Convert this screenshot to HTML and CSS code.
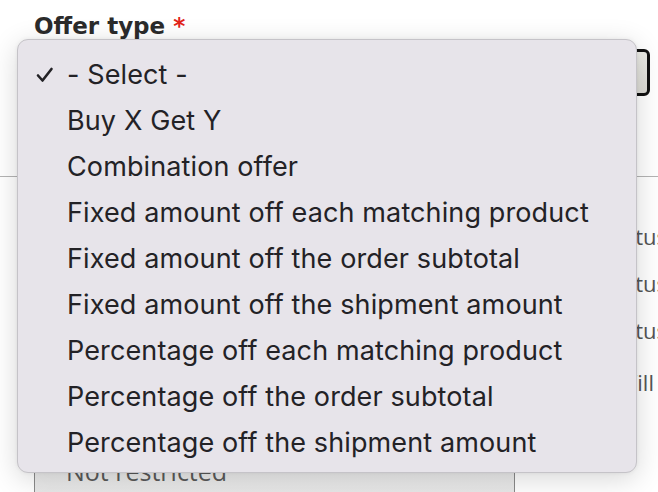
FILE: index.html
```html
<!DOCTYPE html>
<html>
<head>
<meta charset="utf-8">
<link rel="stylesheet" href="styles.css">
</head>
<body>
<div class="page">
  <div class="field">
    <div class="label">Offer type <span class="req">*</span></div>
    <div class="select-box"></div>
  </div>
  <div class="divider"></div>
  <div class="side">
    <div class="side-line">Status</div>
    <div class="side-line">Status</div>
    <div class="side-line">Status</div>
    <div class="side-line will">Will</div>
  </div>
  <div class="restrict">
    <div class="restrict-box">Not restricted</div>
  </div>

  <ul class="menu">
    <li class="item selected"><svg class="check" width="18" height="16" viewBox="0 0 18 16"><polyline points="2,8.5 6.5,13.5 15.5,2" fill="none" stroke="#232226" stroke-width="2.6" stroke-linecap="round" stroke-linejoin="round"/></svg>- Select -</li>
    <li class="item">Buy X Get Y</li>
    <li class="item">Combination offer</li>
    <li class="item">Fixed amount off each matching product</li>
    <li class="item">Fixed amount off the order subtotal</li>
    <li class="item">Fixed amount off the shipment amount</li>
    <li class="item">Percentage off each matching product</li>
    <li class="item">Percentage off the order subtotal</li>
    <li class="item">Percentage off the shipment amount</li>
  </ul>
</div>
</body>
</html>
```

FILE: styles.css
```css
html, body {
  margin: 0;
  padding: 0;
  background: #ffffff;
}
.page {
  position: relative;
  width: 658px;
  height: 492px;
  overflow: hidden;
  font-family: "Open Sans", "Liberation Sans", sans-serif;
}
.field {
  padding: 11px 8px 0 34px;
}
.label {
  font-family: "DejaVu Sans", sans-serif;
  font-weight: 700;
  font-size: 23px;
  line-height: 31px;
  color: #2b2b2b;
  letter-spacing: 0;
}
.req {
  color: #e2231a;
}
.select-box {
  margin-top: 7px;
  height: 41px;
  border: 3px solid #111;
  border-radius: 6px;
  background: linear-gradient(#ebebe6, #dddcd6);
}
.divider {
  margin-top: 80px;
  height: 1px;
  background: #b4b4b4;
}
.side {
  padding: 44px 0 0 603px;
  font-size: 22px;
  color: #555;
  white-space: nowrap;
}
.side-line {
  height: 47px;
  line-height: 30px;
}
.side-line.will {
  margin-top: 5px;
  padding-left: 14px;
}
.restrict {
  position: absolute;
  left: 34px;
  top: 440px;
  width: 481px;
  height: 60px;
}
.restrict-box {
  height: 100%;
  box-sizing: border-box;
  border-left: 1px solid #8a8a8a;
  border-right: 1px solid #8a8a8a;
  background: linear-gradient(#f4f4f4, #e6e6e6);
  font-size: 25px;
  color: #5a5a5a;
  padding: 14px 0 0 31px;
}

.menu {
  position: absolute;
  left: 17px;
  top: 39px;
  width: 620px;
  height: 434px;
  box-sizing: border-box;
  margin: 0;
  padding: 12px 0 0 0;
  list-style: none;
  background: #e7e4ea;
  border: 1px solid #c5c3c8;
  border-radius: 11px;
  box-shadow: 0 6px 28px rgba(0,0,0,0.16), 0 0 4px rgba(0,0,0,0.06);
  font-family: "Inter", "Roboto", sans-serif;
  font-size: 27px;
  letter-spacing: 0.12px;
  color: #232226;
}
.item {
  height: 46px;
  line-height: 46px;
  padding-left: 49px;
  position: relative;
  white-space: nowrap;
}
.check {
  position: absolute;
  left: 18px;
  top: 15px;
}
```
